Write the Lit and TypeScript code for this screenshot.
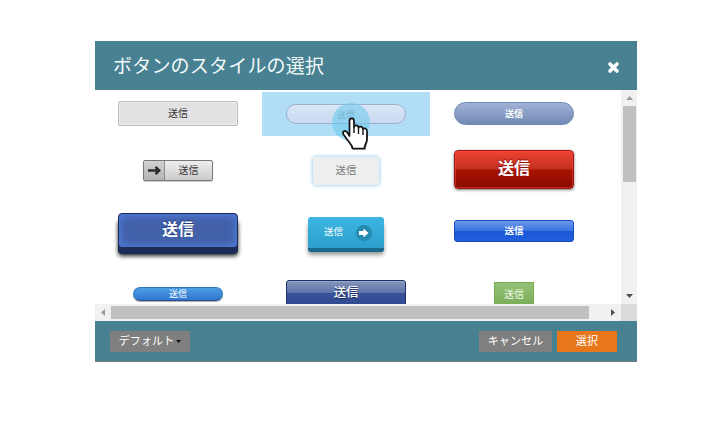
import { LitElement, html, css } from "lit";
import { customElement } from "lit/decorators.js";

interface StyleOption {
  kind: string;
  selected?: boolean;
  icon?: "arrow" | "badge";
}

const OPTIONS: StyleOption[] = [
  { kind: "plain" },
  { kind: "pale", selected: true },
  { kind: "slate" },
  { kind: "split", icon: "arrow" },
  { kind: "glow" },
  { kind: "red" },
  { kind: "deep" },
  { kind: "cyan", icon: "badge" },
  { kind: "royal" },
  { kind: "pill" },
  { kind: "navy" },
  { kind: "green" },
];

@customElement("app-root")
export class AppRoot extends LitElement {
  static styles = css`
    :host {
      display: block;
      box-sizing: border-box;
      width: 703px;
      height: 422px;
      padding: 41px 66px 60px 95px;
      background: #fff;
      font-family: "Noto Sans CJK JP", sans-serif;
      overflow: hidden;
    }
    * { box-sizing: border-box; }
    svg { display: block; }
    .dialog {
      position: relative;
      display: flex;
      flex-direction: column;
      width: 542px;
      height: 321px;
    }
    .header {
      display: flex;
      align-items: center;
      justify-content: space-between;
      height: 49px;
      flex: none;
      padding: 0 17px 0 18px;
      background: #478192;
      color: #f4f9fa;
    }
    .title { margin-bottom: 1px; font-size: 19px; line-height: 26px; letter-spacing: 0.2px; font-weight: 400; }
    .close { margin-top: 4px; }
    .body {
      display: grid;
      grid-template-columns: 526px 16px;
      grid-template-rows: 214px 17px;
      flex: none;
    }
    .view { overflow: hidden; padding-top: 2px; background: #fff; }
    .grid {
      display: grid;
      grid-template-columns: repeat(3, 168px);
      grid-template-rows: 44px 64px 66px 60px;
      margin-left: -1px;
    }
    .cell { display: flex; justify-content: center; align-items: flex-start; }
    .selected { background: #b1ddf6; }
    .btn {
      display: flex;
      align-items: center;
      justify-content: center;
      width: 120px;
      font-size: 10px;
      line-height: 1;
      white-space: nowrap;
    }
    .plain { height: 25px; margin-top: 9px; padding-bottom: 1px; border: 1px solid #bbb; border-radius: 2px; background: #e2e2e2; box-shadow: inset 0 0 0 1px #ececec; color: #333; }
    .pale { height: 20px; margin-top: 12px; border: 1px solid #9daecb; border-radius: 10px; background: linear-gradient(#d7e5f6, #c9daf0); color: #7692a5; font-size: 9px; box-shadow: inset 0 1px 0 #dfeaf8; }
    .slate { height: 23px; margin-top: 10px; border: 1px solid #6d88b5; border-radius: 12px; background: linear-gradient(#a1b3d5, #7189b5); color: #fff; font-size: 9px; font-weight: 700; }
    .split { width: 70px; height: 21px; margin-top: 24px; justify-content: flex-start; border: 1px solid #777; border-radius: 2px; background: linear-gradient(#eee, #cbcbcb); color: #333; box-shadow: 0 1px 1px #ccc; }
    .split .icon { display: flex; align-items: center; justify-content: center; width: 21px; height: 19px; border-right: 1px solid #8d8d8d; background: linear-gradient(#d0d0d0, #b5b5b5); }
    .split .label { flex: 1; text-align: center; padding-bottom: 1px; }
    .glow { width: 66px; height: 28px; margin-top: 21px; border-radius: 3px; background: #eee; box-shadow: 0 0 4px #76bfe6; color: #777; font-size: 10.5px; padding-bottom: 1px; }
    .red { height: 39px; margin-top: 14px; padding-bottom: 5px; border: 1px solid #9d1510; border-radius: 4px; background: linear-gradient(#ee4432 0%, #c23023 49%, #aa1200 51%, #870c00 100%); box-shadow: 0 1px 3px #777, inset 0 0 0 1px rgba(255, 80, 60, 0.45); color: #fff; font-size: 16px; font-weight: 700; text-shadow: 0 -1px 1px #811; }
    .deep { height: 35px; margin-top: 13px; padding-bottom: 5px; border: 1px solid #1c2c58; border-radius: 4px; background: #4261a9; box-shadow: inset 0 0 9px 1px #527fe0, 0 6px 0 #1c2c54, 0 8px 4px #222; color: #fff; font-size: 16px; font-weight: 700; text-shadow: 0 -1px 1px #223a78; }
    .cyan { width: 76px; height: 31px; margin-top: 17px; justify-content: space-between; padding: 0 12px 2px 16px; border-radius: 3px; background: linear-gradient(#3db6e3, #2d9fcc); box-shadow: 0 4px 0 #186a8a, 0 7px 4px #999; color: #fff; font-size: 9.5px; }
    .cyan .icon { margin-top: 3px; }
    .royal { height: 22px; margin-top: 20px; border: 1px solid #174cc0; border-radius: 3px; background: linear-gradient(#6b99ee 0%, #3b74e0 48%, #1757d7 50%, #235fdd 100%); color: #fff; font-size: 9.5px; font-weight: 700; }
    .pill { width: 90px; height: 14px; margin-top: 21px; padding-bottom: 1px; border: 1px solid #3077bc; border-bottom-color: #244e90; border-radius: 7px; background: linear-gradient(#4a9ee2, #3377d0); box-shadow: 0 1px 1px #aaa; color: #fff; font-size: 9px; }
    .navy { height: 26px; margin-top: 14px; padding-bottom: 2px; border: 1px solid #1a2e68; border-radius: 3px; background: linear-gradient(#8594ba 0%, #5e76aa 48%, #39539b 50%, #30498f 100%); box-shadow: inset 0 1px 0 #98a6cc; color: #fff; font-size: 12.5px; font-weight: 500; text-shadow: 0 1px 1px #152354; }
    .green { width: 40px; height: 24px; margin-top: 16px; padding-bottom: 1px; border: 1px solid #74ac4e; background: linear-gradient(#96c079, #79ae58); color: #f2fae8; }
    .vbar, .hbar { display: flex; background: #f1f1f1; }
    .vbar { flex-direction: column; align-items: center; }
    .vbar .arrow, .hbar .arrow { display: flex; align-items: center; justify-content: center; width: 16px; height: 16px; flex: none; }
    .vthumb { width: 13px; height: 76px; margin-left: 1px; background: #c0c0c0; }
    .vspace, .hspace { flex: 1; }
    .hbar { align-items: center; }
    .hthumb { width: 478px; height: 13px; background: #c0c0c0; }
    .corner { background: #dcdcdc; }
    .footer {
      display: flex;
      align-items: flex-start;
      height: 41px;
      flex: none;
      padding: 10px 20px 0 15px;
      border-bottom: 1px solid #7b7d80;
      background: #478192;
      color: #fff;
      font-size: 11px;
    }
    .action { display: flex; align-items: center; justify-content: center; height: 21px; padding-bottom: 2px; line-height: 1; background: #7f7f7f; letter-spacing: 0.15px; }
    .default { width: 80px; gap: 2px; margin-right: auto; }
    .default svg { margin-top: 2px; }
    .cancel { width: 73px; margin-right: 5px; }
    .confirm { width: 60px; background: #e8761a; }
    .pointer { position: absolute; left: 237px; top: 62px; }
  `;

  private icon(name: StyleOption["icon"]) {
    if (name === "arrow") {
      return html`<span class="icon"><svg width="13" height="9" viewBox="0 0 13 9">
        <path d="M0 4.500H11M7.500 .8L11.200 4.500L7.500 8.200" fill="none" stroke="#2b2b2b" stroke-width="2.400"/></svg></span>`;
    }
    if (name === "badge") {
      return html`<span class="icon"><svg width="16" height="16" viewBox="0 0 16 16">
        <circle cx="8" cy="8" r="8" fill="#238bb2"/>
        <path d="M3 6H7.5V3.5L12.5 8L7.5 12.5V10H3Z" fill="#fff"/></svg></span>`;
    }
    return null;
  }

  private option(o: StyleOption) {
    const label = html`<span class="label">送信</span>`;
    return html`<div class="cell ${o.selected ? "selected" : ""}">
      <div class="btn ${o.kind}">
        ${o.icon === "badge" ? [label, this.icon(o.icon)] : [this.icon(o.icon), label]}
      </div>
    </div>`;
  }

  render() {
    return html`
      <div class="dialog">
        <div class="header">
          <span class="title">ボタンのスタイルの選択</span>
          <svg class="close" width="13" height="13" viewBox="0 0 13 13">
            <path d="M3 3L10 10M10 3L3 10" stroke="#fff" stroke-width="3.6" stroke-linecap="round"/>
          </svg>
        </div>
        <div class="body">
          <div class="view"><div class="grid">${OPTIONS.map((o) => this.option(o))}</div></div>
          <div class="vbar">
            <span class="arrow"><svg width="7" height="4"><path d="M0 4L3.5 0L7 4Z" fill="#9b9b9b"/></svg></span>
            <span class="vthumb"></span>
            <span class="vspace"></span>
            <span class="arrow"><svg width="7" height="4"><path d="M0 0H7L3.5 4Z" fill="#505050"/></svg></span>
          </div>
          <div class="hbar">
            <span class="arrow"><svg width="4" height="7"><path d="M4 0V7L0 3.5Z" fill="#9b9b9b"/></svg></span>
            <span class="hthumb"></span>
            <span class="hspace"></span>
            <span class="arrow"><svg width="4" height="7"><path d="M0 0L4 3.5L0 7Z" fill="#505050"/></svg></span>
          </div>
          <div class="corner"></div>
        </div>
        <div class="footer">
          <div class="action default">デフォルト<svg width="5" height="3"><path d="M0 0H5L2.5 3Z" fill="#111"/></svg></div>
          <div class="action cancel">キャンセル</div>
          <div class="action confirm">選択</div>
        </div>
        <svg class="pointer" width="42" height="52" viewBox="0 0 42 52">
          <circle cx="19" cy="19" r="19" fill="#6cc9ec" fill-opacity=".58"/>
          <path d="M19 34V19H23V26L36 30V38L33.500 47H21L13 34Z" fill="#000" opacity=".35"/>
          <path d="M17.500 33V18C17.500 14.500 22 14.500 22 18V24C23 21.500 26 22 26.500 24.500C27.500 22.800 30.500 23.500 31 26C32.500 24.500 35 25.500 35 28.500V36C35 40 32.500 41 32.500 45.500H20.500C20.500 42 17.500 40 15.500 37L11.500 31.500C10 28.500 13 26.500 15 29Z" fill="#fff" stroke="#111" stroke-width="1.700" stroke-linejoin="round"/>
          <path d="M22 24V30M26.500 25V31M31 26V32" stroke="#111" stroke-width="1.400"/>
        </svg>
      </div>
    `;
  }
}
